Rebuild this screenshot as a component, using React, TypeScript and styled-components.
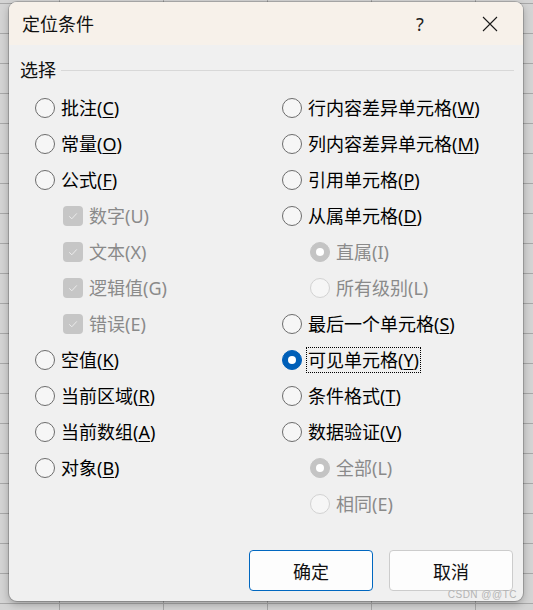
import styled, { createGlobalStyle } from "styled-components";

const GlobalStyle = createGlobalStyle`
  html, body {
    margin: 0;
    padding: 0;
  }
  body {
    width: 533px;
    height: 610px;
    overflow: hidden;
    background-color: #d4d4d4;
    background-image:
      linear-gradient(#a8a8a8 1px, transparent 1px),
      linear-gradient(90deg, #a8a8a8 1px, transparent 1px);
    background-size: 104px 30px;
    background-position: 59px 3px;
    font-family: "Noto Sans", "Noto Sans CJK SC", sans-serif;
  }
`;

type Item = {
  kind: "radio" | "check";
  label: string;
  hotkey: string;
  sub?: boolean;
  disabled?: boolean;
  checked?: boolean;
  focused?: boolean;
};

const leftItems: Item[] = [
  { kind: "radio", label: "批注", hotkey: "C" },
  { kind: "radio", label: "常量", hotkey: "O" },
  { kind: "radio", label: "公式", hotkey: "F" },
  { kind: "check", label: "数字", hotkey: "U", sub: true, disabled: true, checked: true },
  { kind: "check", label: "文本", hotkey: "X", sub: true, disabled: true, checked: true },
  { kind: "check", label: "逻辑值", hotkey: "G", sub: true, disabled: true, checked: true },
  { kind: "check", label: "错误", hotkey: "E", sub: true, disabled: true, checked: true },
  { kind: "radio", label: "空值", hotkey: "K" },
  { kind: "radio", label: "当前区域", hotkey: "R" },
  { kind: "radio", label: "当前数组", hotkey: "A" },
  { kind: "radio", label: "对象", hotkey: "B" },
];

const rightItems: Item[] = [
  { kind: "radio", label: "行内容差异单元格", hotkey: "W" },
  { kind: "radio", label: "列内容差异单元格", hotkey: "M" },
  { kind: "radio", label: "引用单元格", hotkey: "P" },
  { kind: "radio", label: "从属单元格", hotkey: "D" },
  { kind: "radio", label: "直属", hotkey: "I", sub: true, disabled: true, checked: true },
  { kind: "radio", label: "所有级别", hotkey: "L", sub: true, disabled: true },
  { kind: "radio", label: "最后一个单元格", hotkey: "S" },
  { kind: "radio", label: "可见单元格", hotkey: "Y", checked: true, focused: true },
  { kind: "radio", label: "条件格式", hotkey: "T" },
  { kind: "radio", label: "数据验证", hotkey: "V" },
  { kind: "radio", label: "全部", hotkey: "L", sub: true, disabled: true, checked: true },
  { kind: "radio", label: "相同", hotkey: "E", sub: true, disabled: true },
];

const Option = ({ item }: { item: Item }) => (
  <Row $sub={item.sub}>
    {item.kind === "radio" ? (
      <RadioMark $checked={item.checked} $disabled={item.disabled} />
    ) : (
      <CheckMark $disabled={item.disabled}>
        {item.checked && (
          <svg width="12" height="12" viewBox="0 0 12 12">
            <path d="M2.2 6.3 L4.8 8.8 L9.8 3.4" fill="none" stroke="#ececec" strokeWidth="1" />
          </svg>
        )}
      </CheckMark>
    )}
    <Label $disabled={item.disabled} $focused={item.focused}>
      {item.label}(
      {item.disabled ? item.hotkey : <Hotkey>{item.hotkey}</Hotkey>})
    </Label>
  </Row>
);

export default function App() {
  return (
    <>
      <GlobalStyle />
      <Page>
        <Dialog>
          <TitleBar>
            <Title>定位条件</Title>
            <HelpButton>?</HelpButton>
            <CloseButton>
              <svg width="16" height="16" viewBox="0 0 16 16">
                <path d="M1 1 L15 15 M15 1 L1 15" stroke="#1a1a1a" strokeWidth="1.1" />
              </svg>
            </CloseButton>
          </TitleBar>
          <Body>
            <Legend>
              <LegendText>选择</LegendText>
              <LegendLine />
            </Legend>
            <Columns>
              <Column>
                {leftItems.map((it, i) => (
                  <Option key={i} item={it} />
                ))}
              </Column>
              <Column>
                {rightItems.map((it, i) => (
                  <Option key={i} item={it} />
                ))}
              </Column>
            </Columns>
            <Footer>
              <Button $primary>确定</Button>
              <Button>取消</Button>
            </Footer>
          </Body>
          <Watermark>CSDN @@TC</Watermark>
        </Dialog>
      </Page>
    </>
  );
}

const Page = styled.div`
  padding: 2px 10px 0 9px;
`;

const Dialog = styled.div`
  position: relative;
  width: 514px;
  height: 599px;
  display: flex;
  flex-direction: column;
  background: #f0f0f0;
  border-radius: 8px;
  overflow: hidden;
  box-shadow: 0 0 0 1px rgba(0, 0, 0, 0.18), 0 3px 8px rgba(0, 0, 0, 0.28);
`;

const TitleBar = styled.div`
  height: 43px;
  flex-shrink: 0;
  display: flex;
  align-items: center;
  padding: 0 10px 0 13px;
  background: #f7f1ea;
  color: #111;
`;

const Title = styled.div`
  flex: 1;
  font-size: 18px;
  line-height: 24px;
`;

const HelpButton = styled.div`
  width: 46px;
  margin-right: 24px;
  text-align: center;
  font-size: 18px;
  line-height: 24px;
  color: #222;
`;

const CloseButton = styled.div`
  width: 46px;
  height: 43px;
  display: flex;
  align-items: center;
  justify-content: center;
`;

const Body = styled.div`
  flex: 1;
  display: flex;
  flex-direction: column;
  padding: 15px 9px 10px 11px;
`;

const Legend = styled.div`
  height: 20px;
  display: flex;
  align-items: center;
`;

const LegendText = styled.div`
  font-size: 18px;
  line-height: 20px;
  color: #111;
`;

const LegendLine = styled.div`
  flex: 1;
  height: 1px;
  margin-left: 5px;
  margin-top: 1px;
  background: #d8d8d8;
`;

const Columns = styled.div`
  display: grid;
  grid-template-columns: 247px 1fr;
  margin-top: 10px;
  padding-left: 15px;
`;

const Column = styled.div`
  display: flex;
  flex-direction: column;
`;

const Row = styled.div<{ $sub?: boolean }>`
  height: 36px;
  display: flex;
  align-items: center;
  padding-left: ${(p) => (p.$sub ? 28 : 0)}px;
`;

const RadioMark = styled.span<{ $checked?: boolean; $disabled?: boolean }>`
  position: relative;
  width: 20px;
  height: 20px;
  box-sizing: border-box;
  border-radius: 50%;
  flex-shrink: 0;
  border: 1px solid
    ${(p) => (p.$checked ? (p.$disabled ? "#c4c4c4" : "#005fb8") : p.$disabled ? "#d2d2d2" : "#6c6c6c")};
  background: ${(p) => (p.$checked ? (p.$disabled ? "#c4c4c4" : "#005fb8") : "#f6f6f6")};
  &::after {
    content: "";
    display: ${(p) => (p.$checked ? "block" : "none")};
    position: absolute;
    left: 5px;
    top: 5px;
    width: 8px;
    height: 8px;
    border-radius: 50%;
    background: #fff;
  }
`;

const CheckMark = styled.span<{ $disabled?: boolean }>`
  width: 20px;
  height: 20px;
  border-radius: 4px;
  flex-shrink: 0;
  display: flex;
  align-items: center;
  justify-content: center;
  background: ${(p) => (p.$disabled ? "#c6c6c6" : "#005fb8")};
`;

const Label = styled.span<{ $disabled?: boolean; $focused?: boolean }>`
  margin-left: 4px;
  padding: 0 1px;
  border: 1px ${(p) => (p.$focused ? "dotted #000" : "solid transparent")};
  font-size: 18px;
  line-height: 24px;
  white-space: nowrap;
  color: ${(p) => (p.$disabled ? "#8a8a8a" : "#000")};
`;

const Hotkey = styled.span`
  text-decoration: underline;
  text-underline-offset: 2px;
  text-decoration-thickness: 1px;
`;

const Footer = styled.div`
  margin-top: auto;
  display: flex;
  justify-content: flex-end;
  gap: 16px;
  padding-right: 1px;
`;

const Button = styled.button<{ $primary?: boolean }>`
  width: 124px;
  height: 41px;
  box-sizing: border-box;
  border-radius: 4px;
  border: 1px solid ${(p) => (p.$primary ? "#0067c0" : "#cccccc")};
  background: #fdfdfd;
  font-family: "Noto Sans", "Noto Sans CJK SC", sans-serif;
  font-size: 18px;
  color: #111;
  padding: 0;
`;

const Watermark = styled.div`
  position: absolute;
  right: 6px;
  bottom: 1px;
  font-family: "Liberation Sans", sans-serif;
  font-size: 10px;
  letter-spacing: 0.5px;
  color: #b4b4b4;
`;
